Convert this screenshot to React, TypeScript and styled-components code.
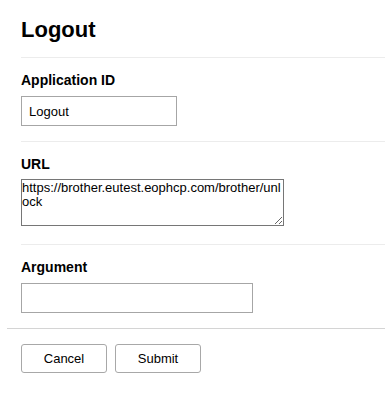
import React from "react";
import styled, { createGlobalStyle } from "styled-components";

const GlobalStyle = createGlobalStyle`
  body {
    margin: 0;
    background: #fff;
    font-family: "Liberation Sans", Arial, sans-serif;
    color: #000;
  }
`;

const Page = styled.div`
  width: 385px;
  padding-left: 7px;
  box-sizing: border-box;
`;

const Body = styled.div`
  padding-left: 14px;
`;

const Header = styled.div`
  padding: 17px 0 15px;
  border-bottom: 1px solid #ececec;
`;

const Title = styled.h1`
  margin: 0;
  font-size: 22px;
  font-weight: bold;
  line-height: 25px;
`;

const Section = styled.div<{ $last?: boolean }>`
  padding: 14px 0 15px;
  border-bottom: ${(p) => (p.$last ? "none" : "1px solid #ececec")};
`;

const Label = styled.label<{ $gap?: number }>`
  display: block;
  font-size: 14px;
  font-weight: bold;
  line-height: 16px;
  margin-bottom: ${(p) => p.$gap ?? 8}px;
`;

const TextInput = styled.input<{ $width: number }>`
  display: block;
  box-sizing: border-box;
  width: ${(p) => p.$width}px;
  height: 30px;
  margin: 0;
  padding: 0 7px;
  border: 1px solid #a6a6a6;
  border-radius: 0;
  font-family: "Liberation Sans", Arial, sans-serif;
  font-size: 13px;
  color: #000;
  outline: none;
`;

const TextArea = styled.textarea`
  display: block;
  box-sizing: border-box;
  width: 263px;
  height: 47px;
  margin: 0 0 3px;
  padding: 1px 0;
  border: 1px solid #767676;
  border-radius: 0;
  font-family: "Liberation Sans", Arial, sans-serif;
  font-size: 13px;
  line-height: 14px;
  color: #000;
  word-break: break-all;
  outline: none;
`;

const Footer = styled.div`
  border-top: 1px solid #d4d4d4;
  padding: 15px 0 0 14px;
  display: flex;
  gap: 8px;
`;

const Button = styled.button`
  box-sizing: border-box;
  width: 86px;
  height: 29px;
  background: #fff;
  border: 1px solid #a8a8a8;
  border-radius: 3px;
  font-family: "Liberation Sans", Arial, sans-serif;
  font-size: 13px;
  color: #000;
  cursor: pointer;
`;

export default function App() {
  return (
    <Page>
      <GlobalStyle />
      <Body>
        <Header>
          <Title>Logout</Title>
        </Header>
        <Section>
          <Label>Application ID</Label>
          <TextInput $width={156} defaultValue="Logout" />
        </Section>
        <Section>
          <Label $gap={7}>URL</Label>
          <TextArea defaultValue="https://brother.eutest.eophcp.com/brother/unlock" />
        </Section>
        <Section $last>
          <Label>Argument</Label>
          <TextInput $width={232} defaultValue="" />
        </Section>
      </Body>
      <Footer>
        <Button>Cancel</Button>
        <Button>Submit</Button>
      </Footer>
    </Page>
  );
}
